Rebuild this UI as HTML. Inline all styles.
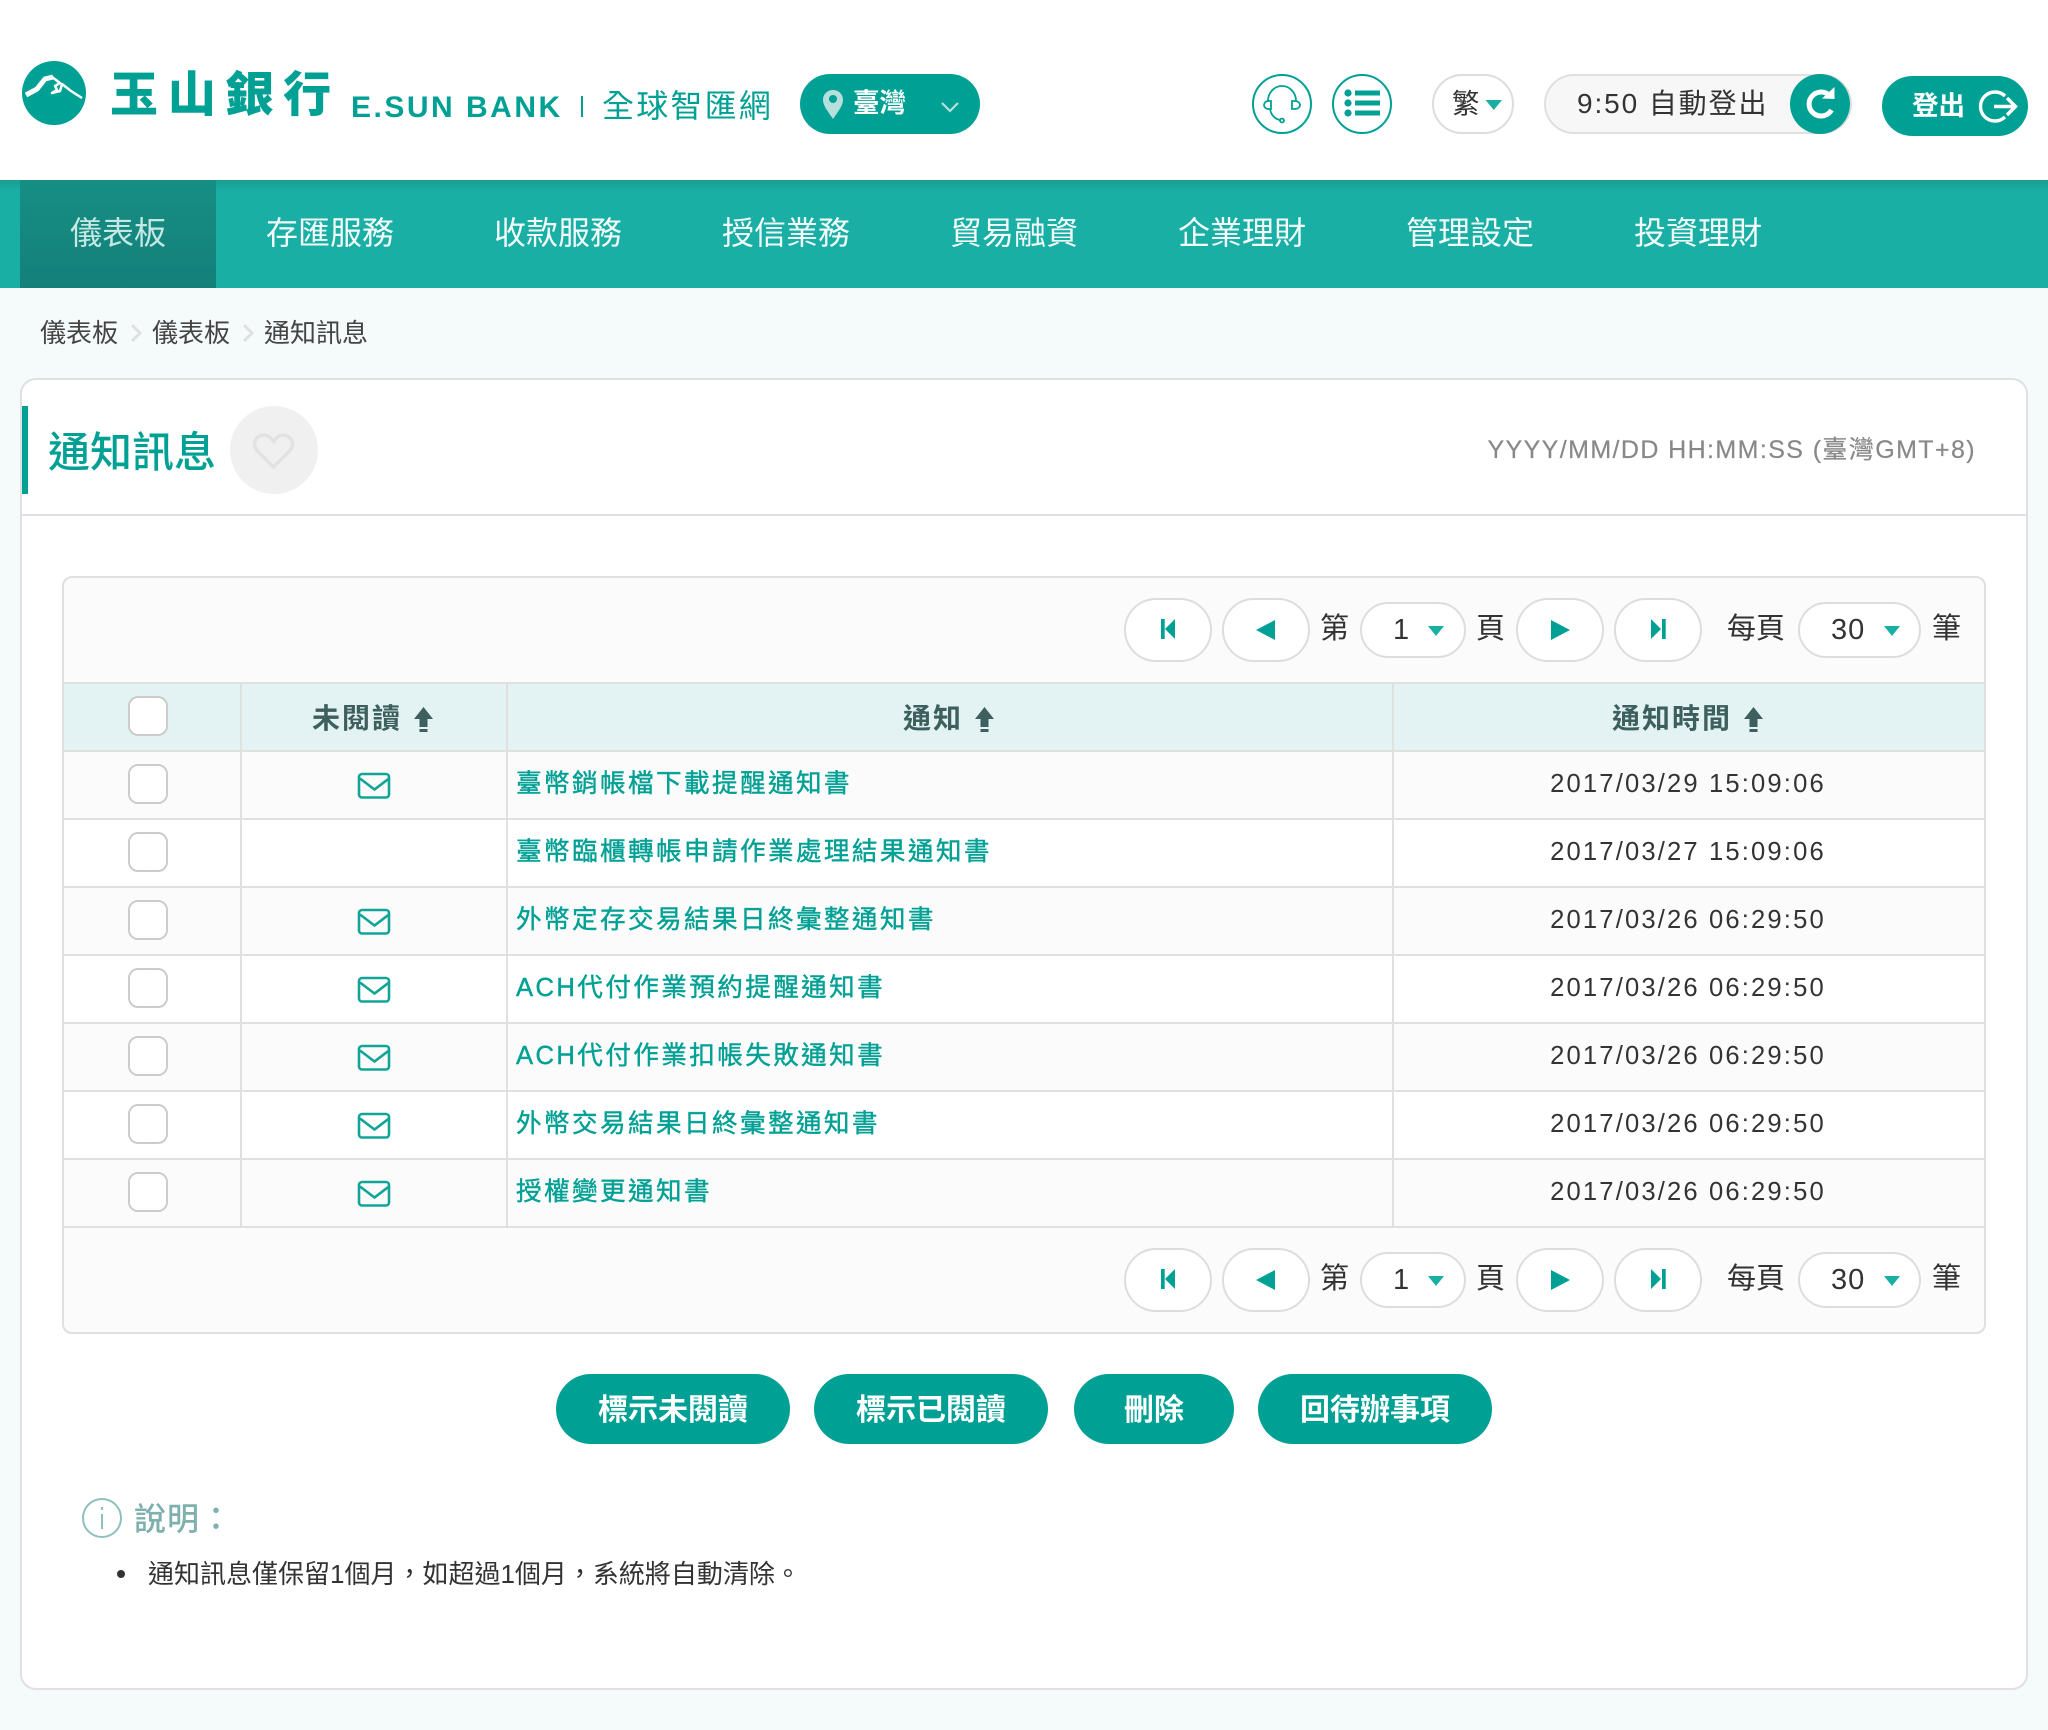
<!DOCTYPE html>
<html lang="zh-Hant"><head><meta charset="utf-8"><title>通知訊息</title>
<style>
html,body{margin:0;padding:0;width:2048px;height:1730px;overflow:hidden;background:#f5fafa}
body{position:relative;font-family:"Liberation Sans","Noto Sans CJK TC",sans-serif;color:#333}
.a,.t{position:absolute;box-sizing:border-box}
.t{white-space:nowrap}
svg{position:absolute;left:0;top:0;overflow:visible}
.nav{color:#fff;font-size:32px;line-height:48px;top:209px;opacity:.95}
.ln{left:516px;color:#00a094;font-size:25.6px;letter-spacing:2.4px;line-height:36px;-webkit-text-stroke:.4px #00a094}
.dt{left:1392px;width:592px;text-align:center;font-size:25.6px;letter-spacing:2.15px;line-height:36px;color:#333}
.cb{left:128px;width:40px;height:40px;border:2px solid #ccc;border-radius:10px;background:#fff}
.th{color:#3d5f5e;font-size:28px;font-weight:700;letter-spacing:2px;line-height:40px;top:699px}
.pb{width:88px;height:64px;border:2px solid #ddd;border-radius:32px;background:#fff}
.sel{height:56px;border:2px solid #ddd;border-radius:28px;background:#fff}
.pt{font-size:29px;line-height:40px;color:#333}
.btn{top:1374px;height:70px;border-radius:35px;background:#00a094;color:#fff;font-size:30px;font-weight:700;line-height:74px;text-align:center}
</style></head><body>

<div class="a" style="left:0;top:0;width:2048px;height:180px;background:#fff"></div>
<div class="a" style="left:22px;top:61px;width:64px;height:64px;border-radius:50%;background:#00a094"></div>
<svg width="2048" height="180"><path d="M52 77 L60 83 L55 86 L57 90 L52 93 L60 91 L62 84 L71 91 L82 98" fill="none" stroke="#fff" stroke-width="2.500" stroke-linejoin="round"/><path d="M26 95 L37 89 L45 79 L53 77" fill="none" stroke="#fff" stroke-width="5"/></svg>
<div class="t" style="left:110px;top:62px;font-size:48px;line-height:68px;font-weight:900;letter-spacing:9.700px;color:#00a094">玉山銀行</div>
<div class="t" style="left:351px;top:87px;font-size:30px;line-height:42px;font-weight:700;letter-spacing:2.500px;color:#00a094">E.SUN BANK</div>
<div class="a" style="left:581px;top:96px;width:2px;height:21px;background:#00a094"></div>
<div class="t" style="left:602px;top:83px;font-size:32px;line-height:46px;letter-spacing:2.200px;color:#00a094">全球智匯網</div>

<div class="a" style="left:800px;top:74px;width:180px;height:60px;border-radius:30px;background:#00a094"></div>
<svg width="2048" height="180"><path d="M833 90c-6 0-10 4.500-10 10 0 6 6 13 10 19 4-6 10-13 10-19 0-5.500-4-10-10-10z" fill="#b5e0dc"/><circle cx="833" cy="99" r="4" fill="#00a094"/><path d="M942 103l8 8 8-8" fill="none" stroke="#b5e0dc" stroke-width="2.200"/></svg>
<div class="t" style="left:853px;top:85px;font-size:26.500px;line-height:36px;font-weight:700;color:#fff">臺灣</div>

<div class="a" style="left:1252px;top:74px;width:60px;height:60px;border:2px solid #00a094;border-radius:50%;background:#fff"></div>
<div class="a" style="left:1332px;top:74px;width:60px;height:60px;border:2px solid #00a094;border-radius:50%;background:#fff"></div>
<svg width="2048" height="180"><g fill="none" stroke="#00a094" stroke-width="1.800"><path d="M1268 101c0-8 6-15 14-15s14 7 14 15"/><path d="M1271 101h-3c-2 0-4 2-4 4s2 4 4 4h3z"/><path d="M1292 101h3c3 0 5 2 5 4s-2 4-5 4h-3z"/><path d="M1270 109c1 6 5 10 10 11"/><circle cx="1282" cy="120.500" r="2"/></g>
<g fill="#00a094"><circle cx="1348" cy="93" r="3.600"/><circle cx="1348" cy="103" r="3.600"/><circle cx="1348" cy="113" r="3.600"/><rect x="1355" y="90.500" width="25" height="5"/><rect x="1355" y="100.500" width="25" height="5"/><rect x="1355" y="110.500" width="25" height="5"/></g></svg>

<div class="a" style="left:1432px;top:74px;width:82px;height:60px;border:2px solid #ddd;border-radius:30px;background:#fff"></div>
<div class="t" style="left:1452px;top:85px;font-size:27.500px;line-height:38px;color:#333">繁</div>
<svg width="2048" height="180"><path d="M1485.500 100h16.500l-8.200 10z" fill="#1aafa5"/></svg>

<div class="a" style="left:1544px;top:74px;width:308px;height:60px;border:2px solid #e0e0e0;border-radius:30px;background:#f7f7f7"></div>
<div class="t" style="left:1577px;top:85px;font-size:28px;line-height:38px;letter-spacing:1.900px;color:#333">9:50 自動登出</div>
<div class="a" style="left:1790px;top:74px;width:60px;height:60px;border-radius:50%;background:#00a094"></div>
<svg width="2048" height="180"><path d="M1829 95a12 12 0 1 0 2.500 15" fill="none" stroke="#fff" stroke-width="5"/><path d="M1822 98.500l12.500 .5v-12z" fill="#fff"/></svg>

<div class="a" style="left:1882px;top:76px;width:146px;height:60px;border-radius:30px;background:#00a094"></div>
<div class="t" style="left:1912px;top:88px;font-size:26.500px;line-height:36px;font-weight:700;color:#fff">登出</div>
<svg width="2048" height="180"><path d="M2005 96a14.500 14.500 0 1 0 0 21" fill="none" stroke="#fff" stroke-width="3.400"/><path d="M1994 106.500h21M2007 98l8.500 8.500-8.500 8.500" fill="none" stroke="#fff" stroke-width="3.400"/></svg>

<div class="a" style="left:0;top:180px;width:2048px;height:108px;background:linear-gradient(#189e94 0,#1aafa5 12px)"></div>
<div class="a" style="left:20px;top:180px;width:196px;height:108px;background:linear-gradient(#168e84,#14807a)"></div>
<div class="t nav" style="left:70px;color:#cfeeea">儀表板</div>
<div class="t nav" style="left:266px">存匯服務</div>
<div class="t nav" style="left:494px">收款服務</div>
<div class="t nav" style="left:722px">授信業務</div>
<div class="t nav" style="left:950px">貿易融資</div>
<div class="t nav" style="left:1178px">企業理財</div>
<div class="t nav" style="left:1406px">管理設定</div>
<div class="t nav" style="left:1634px">投資理財</div>

<div class="t" style="left:40px;top:314px;font-size:26px;line-height:38px;color:#444">儀表板</div>
<div class="t" style="left:152px;top:314px;font-size:26px;line-height:38px;color:#444">儀表板</div>
<div class="t" style="left:264px;top:314px;font-size:26px;line-height:38px;color:#444">通知訊息</div>
<svg width="2048" height="400"><path d="M132 325l8 8-8 8M244 325l8 8-8 8" fill="none" stroke="#e0e0e0" stroke-width="3"/></svg>

<div class="a" style="left:20px;top:378px;width:2008px;height:1312px;background:#fff;border:2px solid #e0e0e0;border-radius:16px"></div>
<div class="a" style="left:22px;top:406px;width:6px;height:88px;background:#00a094"></div>
<div class="t" style="left:48px;top:423px;font-size:42px;line-height:60px;font-weight:500;color:#00a094">通知訊息</div>
<div class="a" style="left:230px;top:406px;width:88px;height:88px;border-radius:50%;background:#f0f0f0"></div>
<svg width="2048" height="520"><path d="M273.500 467l-16-16c-4-4-4-10 0-13.500 4-3.500 10-3 13.500 1l2.500 3 2.500-3c3.500-4 9.500-4.500 13.500-1 4 3.500 4 9.500 0 13.500z" fill="none" stroke="#e2e2e2" stroke-width="3.500"/></svg>
<div class="t" style="right:72px;top:432px;font-size:25px;line-height:36px;letter-spacing:1.400px;color:#888;-webkit-text-stroke:.2px #888">YYYY/MM/DD HH:MM:SS (臺灣GMT+8)</div>
<div class="a" style="left:22px;top:514px;width:2004px;height:2px;background:#e0e0e0"></div>

<div class="a" style="left:62px;top:576px;width:1924px;height:758px;background:#fbfbfb;border:2px solid #e0e0e0;border-radius:10px"></div>
<div class="a" style="left:64px;top:683px;width:1920px;height:68px;background:#e3f3f3"></div>
<div class="a" style="left:64px;top:819px;width:1920px;height:68px;background:#fff"></div>
<div class="a" style="left:64px;top:955px;width:1920px;height:68px;background:#fff"></div>
<div class="a" style="left:64px;top:1091px;width:1920px;height:68px;background:#fff"></div>
<div class="a" style="left:64px;top:682px;width:1920px;height:2px;background:#e0e0e0"></div>
<div class="a" style="left:64px;top:750px;width:1920px;height:2px;background:#e0e0e0"></div>
<div class="a" style="left:64px;top:818px;width:1920px;height:2px;background:#e0e0e0"></div>
<div class="a" style="left:64px;top:886px;width:1920px;height:2px;background:#e0e0e0"></div>
<div class="a" style="left:64px;top:954px;width:1920px;height:2px;background:#e0e0e0"></div>
<div class="a" style="left:64px;top:1022px;width:1920px;height:2px;background:#e0e0e0"></div>
<div class="a" style="left:64px;top:1090px;width:1920px;height:2px;background:#e0e0e0"></div>
<div class="a" style="left:64px;top:1158px;width:1920px;height:2px;background:#e0e0e0"></div>
<div class="a" style="left:64px;top:1226px;width:1920px;height:2px;background:#e0e0e0"></div>
<div class="a" style="left:240px;top:684px;width:2px;height:542px;background:#e0e0e0"></div>
<div class="a" style="left:506px;top:684px;width:2px;height:542px;background:#e0e0e0"></div>
<div class="a" style="left:1392px;top:684px;width:2px;height:542px;background:#e0e0e0"></div>

<div class="a cb" style="top:696px"></div>
<div class="a cb" style="top:764px"></div>
<div class="a cb" style="top:832px"></div>
<div class="a cb" style="top:900px"></div>
<div class="a cb" style="top:968px"></div>
<div class="a cb" style="top:1036px"></div>
<div class="a cb" style="top:1104px"></div>
<div class="a cb" style="top:1172px"></div>

<div class="t th" style="left:312px">未閱讀</div>
<div class="t th" style="left:903px">通知</div>
<div class="t th" style="left:1612px">通知時間</div>
<svg width="2048" height="800"><defs><path id="s" d="M9.500 0L19 12h-5.500v8h-8v-8H0zM5.500 22h8v3h-8z" fill="#3d5f5e"/></defs><use href="#s" x="414" y="707"/><use href="#s" x="975" y="707"/><use href="#s" x="1744" y="707"/></svg>

<svg width="2048" height="1300"><defs><g id="e" fill="none" stroke="#13a498" stroke-width="2.600"><rect x="359" y="0" width="30" height="23.500" rx="3"/><path d="M360 4.500l14.500 11 14.500-11"/></g></defs><use href="#e" y="774"/><use href="#e" y="910"/><use href="#e" y="978"/><use href="#e" y="1046"/><use href="#e" y="1114"/><use href="#e" y="1182"/></svg>

<div class="t ln" style="top:766px">臺幣銷帳檔下載提醒通知書</div>
<div class="t ln" style="top:834px">臺幣臨櫃轉帳申請作業處理結果通知書</div>
<div class="t ln" style="top:902px">外幣定存交易結果日終彙整通知書</div>
<div class="t ln" style="top:970px">ACH代付作業預約提醒通知書</div>
<div class="t ln" style="top:1038px">ACH代付作業扣帳失敗通知書</div>
<div class="t ln" style="top:1106px">外幣交易結果日終彙整通知書</div>
<div class="t ln" style="top:1174px">授權變更通知書</div>

<div class="t dt" style="top:766px">2017/03/29 15:09:06</div>
<div class="t dt" style="top:834px">2017/03/27 15:09:06</div>
<div class="t dt" style="top:902px">2017/03/26 06:29:50</div>
<div class="t dt" style="top:970px">2017/03/26 06:29:50</div>
<div class="t dt" style="top:1038px">2017/03/26 06:29:50</div>
<div class="t dt" style="top:1106px">2017/03/26 06:29:50</div>
<div class="t dt" style="top:1174px">2017/03/26 06:29:50</div>

<!-- top pagination -->
<div class="a pb" style="left:1124px;top:598px"></div>
<div class="a pb" style="left:1222px;top:598px"></div>
<div class="a pb" style="left:1516px;top:598px"></div>
<div class="a pb" style="left:1614px;top:598px"></div>
<div class="a sel" style="left:1360px;top:602px;width:106px"></div>
<div class="a sel" style="left:1798px;top:602px;width:123px"></div>
<div class="t pt" style="left:1320px;top:609px">第</div>
<div class="t pt" style="left:1393px;top:610px">1</div>
<div class="t pt" style="left:1476px;top:609px">頁</div>
<div class="t pt" style="left:1727px;top:609px">每頁</div>
<div class="t pt" style="left:1831px;top:610px;letter-spacing:1px">30</div>
<div class="t pt" style="left:1932px;top:609px">筆</div>
<!-- bottom pagination -->
<div class="a pb" style="left:1124px;top:1248px"></div>
<div class="a pb" style="left:1222px;top:1248px"></div>
<div class="a pb" style="left:1516px;top:1248px"></div>
<div class="a pb" style="left:1614px;top:1248px"></div>
<div class="a sel" style="left:1360px;top:1252px;width:106px"></div>
<div class="a sel" style="left:1798px;top:1252px;width:123px"></div>
<div class="t pt" style="left:1320px;top:1259px">第</div>
<div class="t pt" style="left:1393px;top:1260px">1</div>
<div class="t pt" style="left:1476px;top:1259px">頁</div>
<div class="t pt" style="left:1727px;top:1259px">每頁</div>
<div class="t pt" style="left:1831px;top:1260px;letter-spacing:1px">30</div>
<div class="t pt" style="left:1932px;top:1259px">筆</div>
<svg width="2048" height="1400"><defs><g id="p"><path d="M1161 619h3.700v20h-3.700zM1175 619v20l-10-10zM1275 620v20l-19-10zM1551 620v20l19-10zM1651 619v20l10-10zM1662 619h3.700v20h-3.700z" fill="#00a094"/><path d="M1428 626h16l-8 10zM1884 626h16l-8 10z" fill="#1aafa5"/></g></defs><use href="#p"/><use href="#p" y="650"/></svg>

<div class="a btn" style="left:556px;width:234px">標示未閱讀</div>
<div class="a btn" style="left:814px;width:234px">標示已閱讀</div>
<div class="a btn" style="left:1074px;width:160px">刪除</div>
<div class="a btn" style="left:1258px;width:234px">回待辦事項</div>

<svg width="2048" height="1600"><circle cx="102" cy="1518" r="19" fill="none" stroke="#8fc0c0" stroke-width="2"/><path d="M102 1514v15M102 1507v3" stroke="#8fc0c0" stroke-width="2" fill="none"/><circle cx="121" cy="1574" r="4" fill="#333"/></svg>
<div class="t" style="left:134px;top:1496px;font-size:32px;line-height:46px;font-weight:500;letter-spacing:1px;color:#7fb0ae">說明：</div>
<div class="t" style="left:148px;top:1556px;font-size:26px;line-height:36px;color:#333">通知訊息僅保留1個月，如超過1個月，系統將自動清除。</div>
</body></html>
